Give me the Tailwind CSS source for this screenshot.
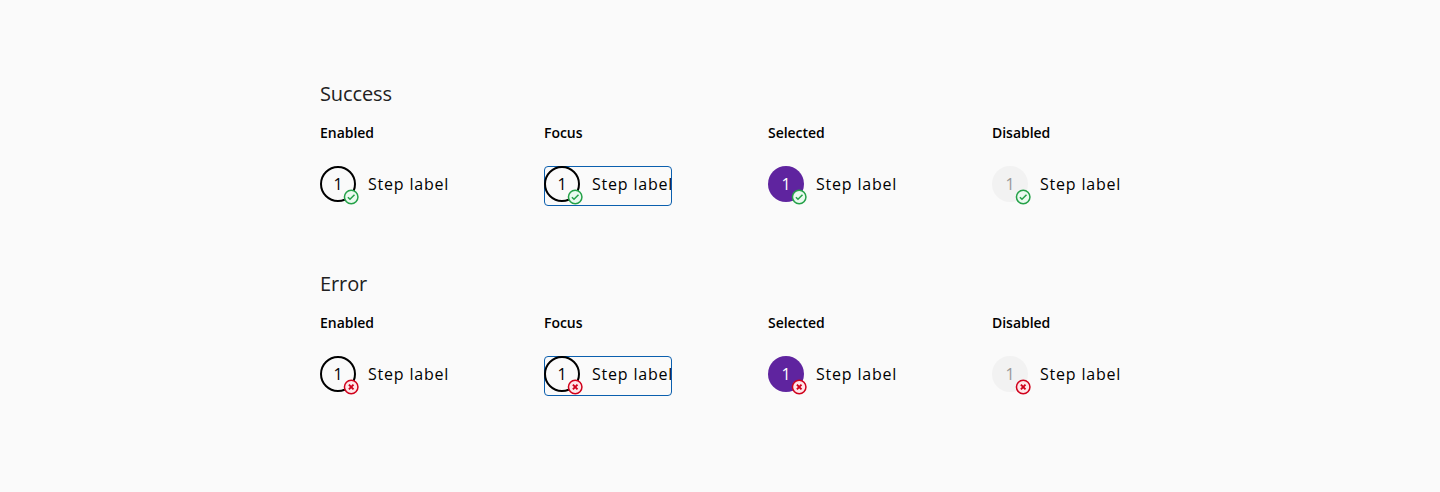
<!DOCTYPE html>
<html lang="en"><head><meta charset="utf-8"><title>Step states</title>
<script src="https://cdn.jsdelivr.net/npm/@tailwindcss/browser@4"></script></head>
<body class="bg-[#fafafa] font-['Open_Sans',sans-serif] text-black antialiased">
<svg class="hidden">
<symbol id="ok" viewBox="0 0 18 18"><circle cx="9.2" cy="9" r="6.75" fill="#eafaef" stroke="#24a148" stroke-width="1.5"/><path d="M5.9 9.2 8 11.3 12.5 6.8" fill="none" stroke="#24a148" stroke-width="1.5"/></symbol>
<symbol id="err" viewBox="0 0 18 18"><circle cx="9.2" cy="9" r="6.75" fill="#ffe6e9" stroke="#d0011b" stroke-width="1.5"/><path d="M6.9 6.7 11.5 11.3M11.5 6.7 6.9 11.3" fill="none" stroke="#d0011b" stroke-width="1.9"/></symbol>
</svg>
<main class="flex h-[492px] flex-col gap-[70px] pt-20 pl-80" id="main"></main>
<script>
const states = [
 ['Enabled', 'border-2 border-black', ''],
 ['Focus', 'border-2 border-black', 'outline outline-1 -outline-offset-1 outline-[#0b5fae] rounded'],
 ['Selected', 'bg-[#5f249f] text-white', ''],
 ['Disabled', 'bg-[#f2f2f2] text-[#999999]', '']
];
document.getElementById('main').innerHTML = [['Success','ok'],['Error','err']].map(([title, icon]) => `
<section class="h-[120px]">
 <h2 class="h-7 text-xl leading-7 tracking-[-0.1px] text-[#212121]">${title}</h2>
 <div class="mt-[14px] flex gap-24">${states.map(([name, circle, box]) => `
  <div class="w-32">
   <h3 class="text-sm leading-[22px] font-semibold tracking-[-0.03px]">${name}</h3>
   <div class="mt-[22px] flex h-10 gap-3 ${box}">
    <div class="relative size-9 shrink-0">
     <div class="flex size-9 items-center justify-center rounded-full text-base leading-none ${circle}">1</div>
     <svg class="absolute top-[22px] left-[22px] size-[18px]"><use href="#${icon}"/></svg>
    </div>
    <span class="text-base leading-9 tracking-[0.8px] whitespace-nowrap">Step label</span>
   </div>
  </div>`).join('')}
 </div>
</section>`).join('');
</script>
</body></html>
